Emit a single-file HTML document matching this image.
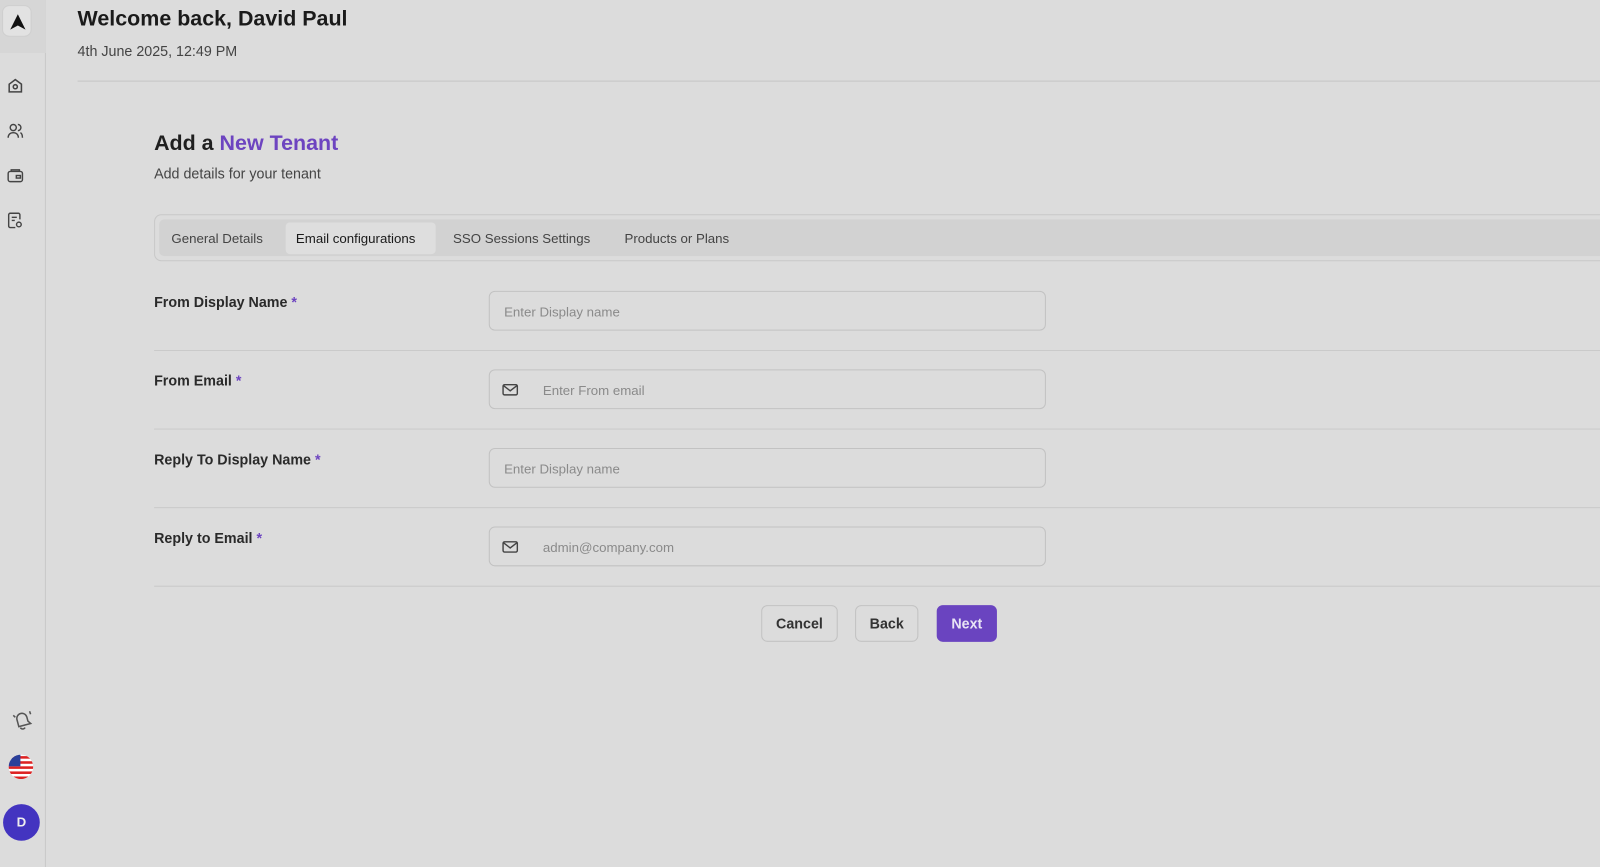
<!DOCTYPE html>
<html><head><meta charset="utf-8"><style>
*{box-sizing:border-box;margin:0;padding:0}
body{width:1600px;height:850px;background:#dcdcdc;font-family:"Liberation Sans",sans-serif;overflow:hidden;color:#1f1f1f}
#w{position:absolute;left:0;top:0;width:1568px;height:833px;transform:scale(1.0204);transform-origin:0 0}
.side{position:absolute;left:0;top:0;width:45px;height:850px;border-right:1px solid #c8c8c8}
.logo{position:absolute;left:2px;top:5px;width:29px;height:31px;border:1px solid #cfcfcf;border-radius:7px;background:#e2e2e2}
.logoarea{position:absolute;left:0;top:0;width:45px;height:52px;background:#d6d6d6}
.ic{position:absolute;left:6px}
h1{position:absolute;left:76px;top:7px;font-size:21px;font-weight:bold;color:#1a1a1a}
.date{position:absolute;left:76px;top:42px;font-size:14px;color:#444}
.hr{position:absolute;left:76px;top:79px;width:1524px;height:1px;background:#c6c6c6}
h2{position:absolute;left:151px;top:129px;font-size:21px;font-weight:bold}
h2 span{color:#6d44c0}
.sub{position:absolute;left:151px;top:162px;font-size:14px;color:#444}
.tabs{position:absolute;left:151px;top:210px;width:1460px;height:46px;border:1px solid #c8c8c8;border-radius:7px}
.tabin{position:absolute;left:4px;top:4px;right:0;height:36px;background:#d2d2d2;border-radius:5px}
.tab{position:absolute;top:11px;font-size:13px;color:#444}
.tabact{position:absolute;left:124px;top:3px;width:147px;height:31px;background:#dedede;border-radius:4px}
.lbl{position:absolute;left:151px;font-size:14px;font-weight:bold;color:#2a2a2a}
.lbl i{font-style:normal;color:#6d44c0}
.inp{position:absolute;left:479px;width:546px;height:39px;border:1px solid #c2c2c2;border-radius:6px;font-size:13px;color:#8a8a8a;padding-top:12px;padding-left:14px}
.inp.m{padding-left:52px}
.inp svg{position:absolute;left:12px;top:12px}
.sep{position:absolute;left:151px;width:1449px;height:1px;background:#cacaca}
.btn{position:absolute;top:593px;height:36px;border:1px solid #c2c2c2;border-radius:6px;font-size:14px;font-weight:bold;text-align:center;line-height:34px;color:#333}
</style></head><body><div id="w">
<div class="side">
<div class="logoarea"></div>
<div class="logo"><svg width="29" height="31" viewBox="0 0 29 31"><path d="M14.5 8 L22 23 L14.5 19 L7 23 Z" fill="#111"/></svg></div>
<svg class="ic" style="top:75px" width="18" height="18" viewBox="0 0 18 18" fill="none" stroke="#444" stroke-width="1.5"><path d="M3 7.5 L9 3 L15 7.5 V15 H3 Z"/><circle cx="9" cy="10" r="2"/></svg>
<svg class="ic" style="top:119px" width="18" height="18" viewBox="0 0 18 18" fill="none" stroke="#444" stroke-width="1.4"><circle cx="7" cy="6" r="3"/><path d="M2 16c0-3 2-5 5-5s5 2 5 5"/><path d="M11.5 3a3 3 0 0 1 0 6M14 11c1.5.8 2 2.5 2 5"/></svg>
<svg class="ic" style="top:163px" width="18" height="18" viewBox="0 0 18 18" fill="none" stroke="#444" stroke-width="1.4"><rect x="2" y="5" width="14" height="10" rx="2"/><path d="M5 5V3.5h8V5"/><rect x="10" y="9" width="4" height="2.5"/></svg>
<svg class="ic" style="top:207px" width="18" height="18" viewBox="0 0 18 18" fill="none" stroke="#444" stroke-width="1.4"><path d="M9 16H4a1.5 1.5 0 0 1-1.5-1.5V3.5A1.5 1.5 0 0 1 4 2h8a1.5 1.5 0 0 1 1.5 1.5V8"/><path d="M5.5 6h5M5.5 9h3"/><circle cx="12.5" cy="13" r="2.3"/></svg>
<svg style="position:absolute;left:10px;top:694px" width="24" height="24" viewBox="0 0 24 24" fill="none" stroke="#555" stroke-width="1.5"><path d="M7 17h12l-2-3v-4a5 5 0 0 0-10 0v4z" transform="rotate(-15 12 12)"/><path d="M10 19a2.5 2.5 0 0 0 4.5 0"/><path d="M3 7l2 2M19 3l1 3"/></svg>
<svg style="position:absolute;left:8px;top:739px" width="25" height="25" viewBox="0 0 25 25"><defs><clipPath id="c"><circle cx="12.5" cy="12.5" r="12"/></clipPath></defs><g clip-path="url(#c)"><rect width="25" height="25" fill="#fff"/><rect y="2" width="25" height="2.5" fill="#d22"/><rect y="7" width="25" height="2.5" fill="#d22"/><rect y="12" width="25" height="2.5" fill="#d22"/><rect y="17" width="25" height="2.5" fill="#d22"/><rect y="22" width="25" height="2.5" fill="#d22"/><rect width="12" height="12" fill="#2a3f9a"/></g></svg>
<div style="position:absolute;left:3px;top:788px;width:36px;height:36px;border-radius:50%;background:#4334c0;color:#eee;font-weight:bold;font-size:13px;text-align:center;line-height:36px">D</div>
</div>
<h1>Welcome back, David Paul</h1>
<div class="date">4th June 2025, 12:49 PM</div>
<div class="hr"></div>
<h2>Add a <span>New Tenant</span></h2>
<div class="sub">Add details for your tenant</div>
<div class="tabs"><div class="tabin"><div class="tabact"></div>
<div class="tab" style="left:12px">General Details</div>
<div class="tab" style="left:134px;color:#1a1a1a">Email configurations</div>
<div class="tab" style="left:288px">SSO Sessions Settings</div>
<div class="tab" style="left:456px">Products or Plans</div>
</div></div>
<div class="lbl" style="top:288px">From Display Name <i>*</i></div>
<div class="inp" style="top:285px">Enter Display name</div>
<div class="sep" style="top:343px"></div>
<div class="lbl" style="top:365px">From Email <i>*</i></div>
<div class="inp m" style="top:362px"><svg width="16" height="14" viewBox="0 0 16 14" fill="none" stroke="#444" stroke-width="1.4"><rect x="1" y="2" width="14" height="10" rx="1.5"/><path d="M1.5 3l6.5 5 6.5-5"/></svg>Enter From email</div>
<div class="sep" style="top:420px"></div>
<div class="lbl" style="top:442px">Reply To Display Name <i>*</i></div>
<div class="inp" style="top:439px">Enter Display name</div>
<div class="sep" style="top:497px"></div>
<div class="lbl" style="top:519px">Reply to Email <i>*</i></div>
<div class="inp m" style="top:516px"><svg width="16" height="14" viewBox="0 0 16 14" fill="none" stroke="#444" stroke-width="1.4"><rect x="1" y="2" width="14" height="10" rx="1.5"/><path d="M1.5 3l6.5 5 6.5-5"/></svg>admin@company.com</div>
<div class="sep" style="top:574px"></div>
<div class="btn" style="left:746px;width:75px">Cancel</div>
<div class="btn" style="left:838px;width:62px">Back</div>
<div class="btn" style="left:918px;width:59px;background:#6a44c0;border-color:#6a44c0;color:#e8e3f5">Next</div>
</div></body></html>
